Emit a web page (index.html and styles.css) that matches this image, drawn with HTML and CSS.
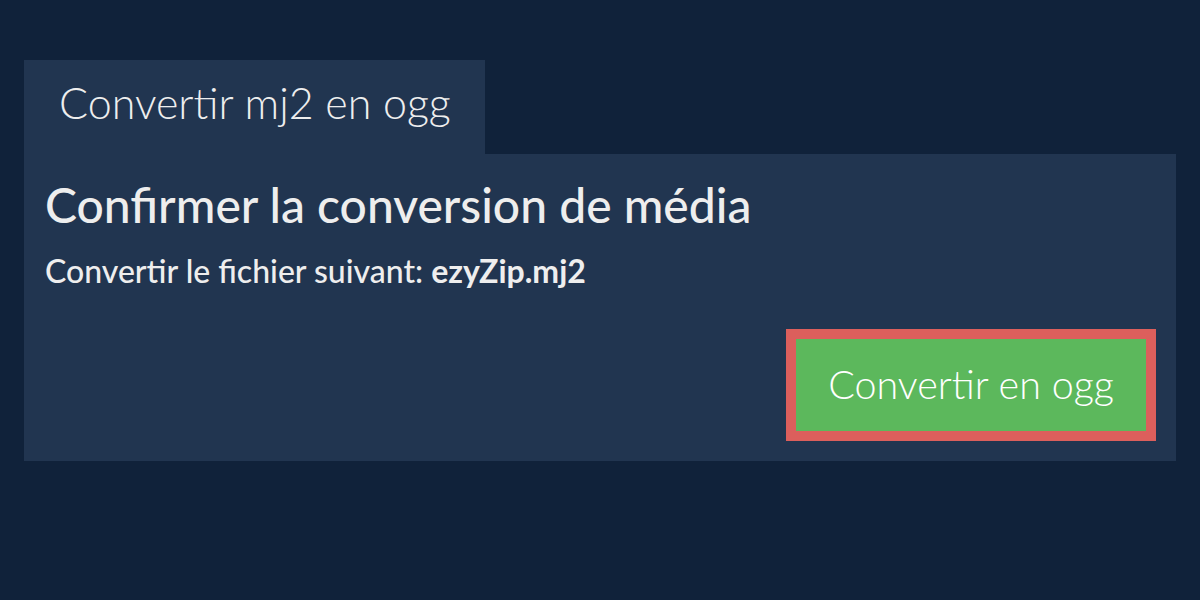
FILE: index.html
```html
<!DOCTYPE html>
<html lang="fr">
<head>
<meta charset="utf-8">
<title>Convertir mj2 en ogg</title>
<link rel="stylesheet" href="styles.css">
</head>
<body>
<main class="page">
  <div class="tab">Convertir mj2 en ogg</div>
  <section class="panel">
    <h1 class="title">Confirmer la conversion de média</h1>
    <p class="file">Convertir le fichier suivant: <strong>ezyZip.mj2</strong></p>
    <div class="actions">
      <button class="convert">Convertir en ogg</button>
    </div>
  </section>
</main>
</body>
</html>
```
FILE: styles.css
```css
html, body {
  margin: 0;
  padding: 0;
  background: #10223a;
  font-family: Lato, "Open Sans", sans-serif;
  color: #eeeeee;
}
.page {
  padding: 60px 24px 0 24px;
  display: flex;
  flex-direction: column;
  align-items: flex-start;
}
.tab {
  background: #213550;
  height: 94px;
  box-sizing: border-box;
  padding: 0 34px 10px 35px;
  display: flex;
  align-items: center;
  font-weight: 300;
  font-size: 43px;
  color: #eeeeee;
}
.panel {
  align-self: stretch;
  background: #213550;
  height: 307px;
  box-sizing: border-box;
  padding: 19px 20px 0 21px;
  display: flex;
  flex-direction: column;
}
.title {
  margin: 0;
  font-size: 48px;
  font-weight: 500;
  line-height: 64px;
}
.file {
  margin: 0;
  font-size: 32px;
  font-weight: 500;
  line-height: 68px;
}
.file strong {
  font-weight: 700;
}
.actions {
  display: flex;
  justify-content: flex-end;
  margin-top: 24px;
}
.convert {
  width: 370px;
  height: 112px;
  box-sizing: border-box;
  border: 10px solid #dc5f5c;
  background: #5cb85c;
  color: #ffffff;
  font-family: Lato, "Open Sans", sans-serif;
  font-weight: 300;
  font-size: 39.5px;
  padding: 0 0 4px 0;
}
```
